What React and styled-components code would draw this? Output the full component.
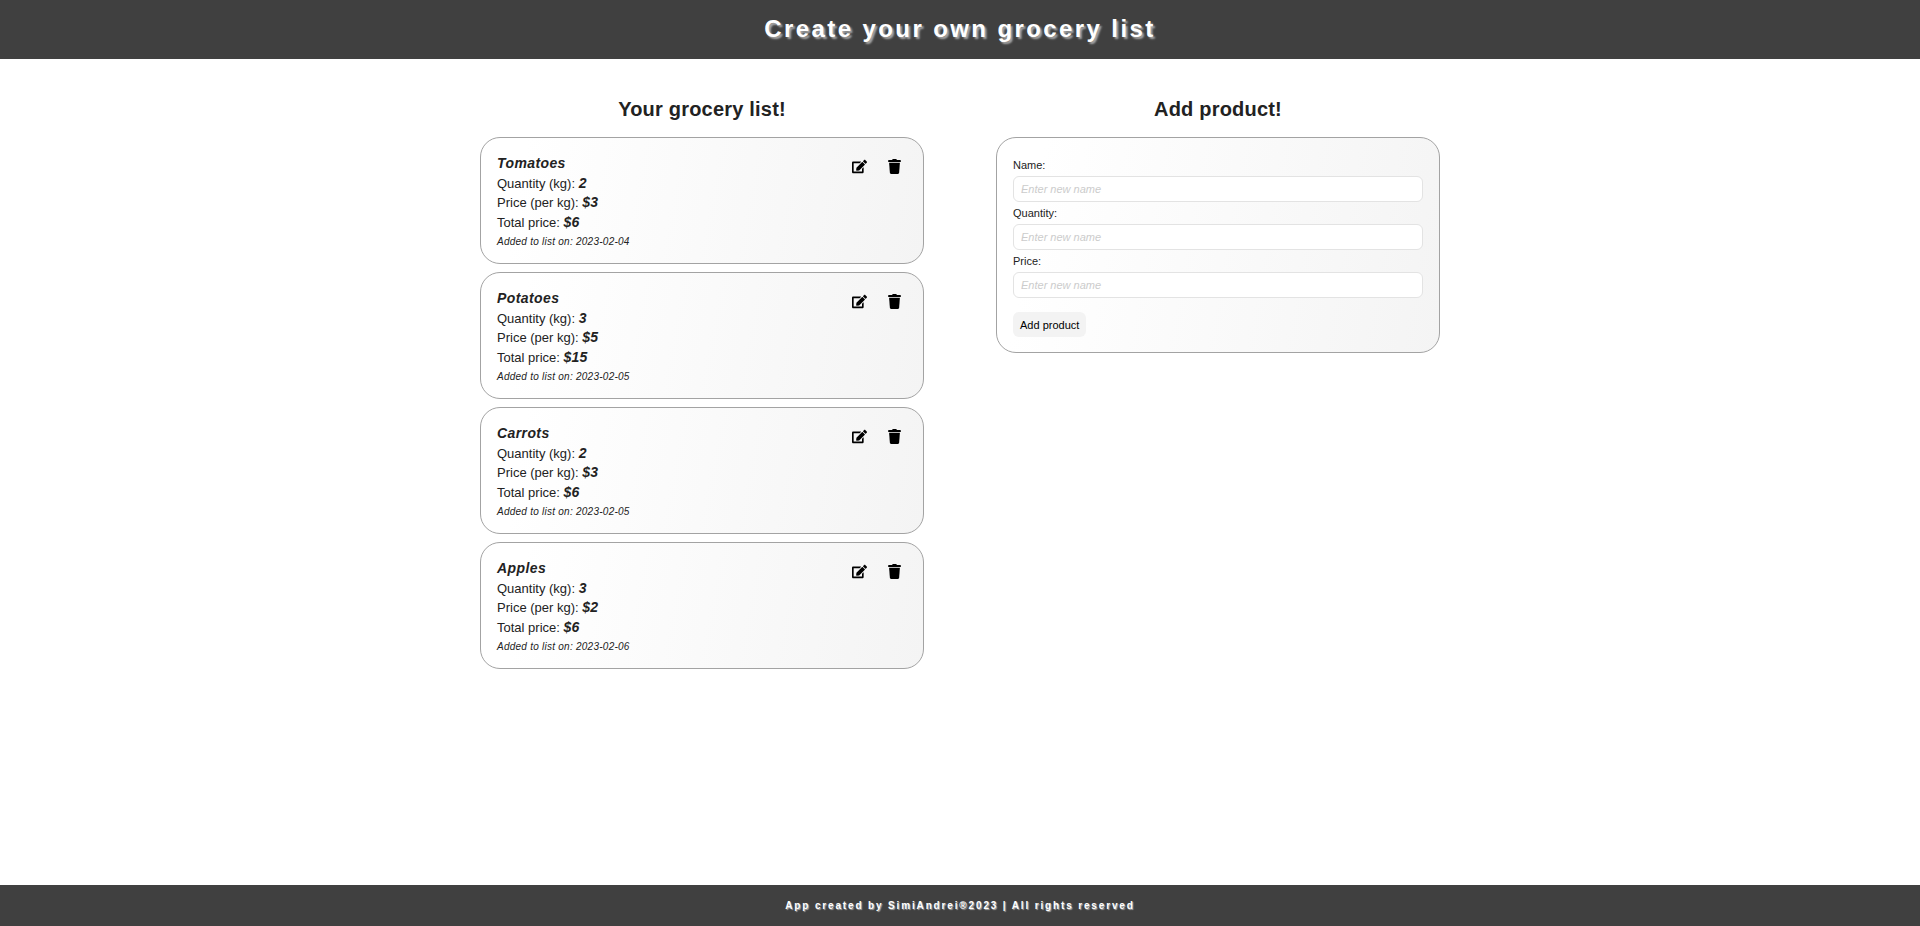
import React from 'react';
import styled, { createGlobalStyle } from 'styled-components';
import { FaEdit } from 'react-icons/fa';

const GlobalStyle = createGlobalStyle`
  * {
    box-sizing: border-box;
  }
  body {
    margin: 0;
    font-family: 'Liberation Sans', Arial, sans-serif;
    color: #222;
    background: #fff;
  }
`;

const Page = styled.div`
  min-height: 926px;
  display: flex;
  flex-direction: column;
`;

const Header = styled.header`
  height: 59px;
  background: #404040;
  display: flex;
  align-items: center;
  justify-content: center;
  padding-bottom: 2px;
  h1 {
    margin: 0;
    font-size: 24px;
    font-weight: 700;
    letter-spacing: 2.4px;
    color: #fff;
    text-shadow: 2px 2px 2px #aaa;
  }
`;

const Main = styled.main`
  flex: 1;
  width: 960px;
  margin: 0 auto;
  padding-top: 39px;
  display: grid;
  grid-template-columns: 444px 444px;
  justify-content: space-between;
  align-items: start;
`;

const Column = styled.section`
  display: flex;
  flex-direction: column;
`;

const Title = styled.h2`
  margin: 0 0 16px;
  height: 23px;
  line-height: 23px;
  font-size: 20px;
  font-weight: 700;
  letter-spacing: 0.2px;
  text-align: center;
  color: #222;
`;

const Card = styled.div`
  border: 1px solid #a3a3a3;
  border-radius: 20px;
  background: linear-gradient(100deg, #fff 10%, #f4f4f4 100%);
  padding: 16px;
`;

const ProductCard = styled(Card)`
  height: 127px;
  margin-bottom: 8px;
  display: flex;
  justify-content: space-between;
`;

const Info = styled.div`
  padding-top: 1px;
`;

const Name = styled.div`
  font-size: 14px;
  font-weight: 700;
  font-style: italic;
  letter-spacing: 0.4px;
  line-height: 16px;
  margin-bottom: 3px;
`;

const Line = styled.div`
  font-size: 13px;
  line-height: 19.3px;
  b {
    font-size: 14px;
    font-style: italic;
    letter-spacing: 0.2px;
  }
`;

const DateLine = styled.div`
  font-size: 10px;
  font-style: italic;
  letter-spacing: 0.25px;
  line-height: 12px;
  margin-top: 4px;
`;

const Actions = styled.div`
  display: flex;
  gap: 21px;
  padding: 5px 6px 0 0;
  color: #000;
  svg {
    display: block;
  }
`;

const EditIcon = styled(FaEdit)`
  width: 15px;
  height: 15px;
`;

const TrashSvg = styled.svg`
  width: 13px;
  height: 15px;
`;

const TrashIcon = () => (
  <TrashSvg viewBox="0 0 14 15" fill="currentColor" preserveAspectRatio="none">
    <path d="M5 0h4l.5 1H13.300c.3 0 .5.2.5.5V3H.2V1.500c0-.3.2-.5.5-.5H4.500z" />
    <path d="M1.200 3.800h11.600l-.8 10c-.1.700-.6 1.200-1.300 1.200H3.300c-.7 0-1.200-.5-1.300-1.200z" />
  </TrashSvg>
);

const FormCard = styled(Card)`
  padding: 21px 16px 15px;
`;

const Label = styled.label`
  display: block;
  font-size: 11px;
  line-height: 13px;
  margin-bottom: 4px;
  color: #222;
`;

const Input = styled.input`
  display: block;
  width: 100%;
  height: 26px;
  margin-bottom: 5px;
  padding: 0 7px;
  border: 1px solid #e3e3e3;
  border-radius: 6px;
  background: #fff;
  font-family: inherit;
  font-size: 11px;
  outline: none;
  &::placeholder {
    font-style: italic;
    color: #cccccc;
  }
`;

const AddButton = styled.button`
  display: block;
  margin-top: 14px;
  height: 25px;
  padding: 0 7px;
  border: none;
  border-radius: 6px;
  background: #f3f3f3;
  font-family: inherit;
  font-size: 11px;
  color: #000;
`;

const Footer = styled.footer`
  height: 41px;
  background: #404040;
  display: flex;
  align-items: center;
  justify-content: center;
  font-size: 10px;
  font-weight: 700;
  letter-spacing: 1.85px;
  color: #fff;
  text-shadow: 1px 1px 1px #aaa;
`;

const products = [
  { name: 'Tomatoes', qty: 2, price: 3, added: '2023-02-04' },
  { name: 'Potatoes', qty: 3, price: 5, added: '2023-02-05' },
  { name: 'Carrots', qty: 2, price: 3, added: '2023-02-05' },
  { name: 'Apples', qty: 3, price: 2, added: '2023-02-06' },
];

const fields = ['Name', 'Quantity', 'Price'];

const App = () => (
  <Page>
    <GlobalStyle />
    <Header>
      <h1>Create your own grocery list</h1>
    </Header>
    <Main>
      <Column>
        <Title>Your grocery list!</Title>
        {products.map(p => (
          <ProductCard key={p.name}>
            <Info>
              <Name>{p.name}</Name>
              <Line>
                Quantity (kg): <b>{p.qty}</b>
              </Line>
              <Line>
                Price (per kg): <b>${p.price}</b>
              </Line>
              <Line>
                Total price: <b>${p.qty * p.price}</b>
              </Line>
              <DateLine>Added to list on: {p.added}</DateLine>
            </Info>
            <Actions>
              <EditIcon />
              <TrashIcon />
            </Actions>
          </ProductCard>
        ))}
      </Column>
      <Column>
        <Title>Add product!</Title>
        <FormCard as="form">
          {fields.map(f => (
            <div key={f}>
              <Label>{f}:</Label>
              <Input type="text" placeholder="Enter new name" />
            </div>
          ))}
          <AddButton type="button">Add product</AddButton>
        </FormCard>
      </Column>
    </Main>
    <Footer>App created by SimiAndrei®2023 | All rights reserved</Footer>
  </Page>
);

export default App;
